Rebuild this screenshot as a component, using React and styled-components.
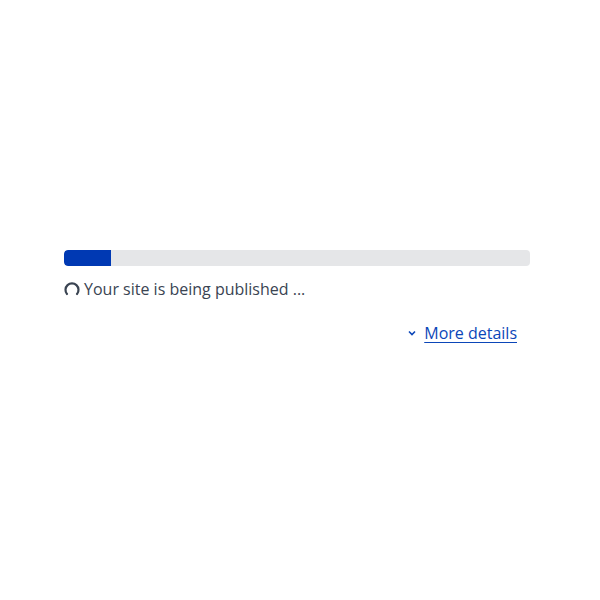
import React from "react";
import styled, { createGlobalStyle } from "styled-components";

const Global = createGlobalStyle`
  html, body { margin: 0; padding: 0; background: #fff; }
  body { font-family: "Open Sans", "Noto Sans", sans-serif; }
`;

const Page = styled.div`
  padding: 250px 70px 0 64px;
`;

const Track = styled.div`
  height: 16px;
  background: #e5e6e8;
  border-radius: 4px;
  overflow: hidden;
`;

const Fill = styled.div`
  height: 100%;
  background: #0039b3;
  border-radius: 4px 0 0 4px;
`;

const Status = styled.div`
  display: flex;
  align-items: center;
  gap: 4px;
  margin-top: 11px;
  font-size: 16px;
  line-height: 24px;
  color: #3a4452;
`;

const Spinner = styled.svg`
  width: 16px;
  height: 16px;
  flex: none;
`;

const Actions = styled.div`
  display: flex;
  justify-content: flex-end;
  margin-top: 20px;
  padding-right: 13px;
`;

const Link = styled.a`
  display: inline-flex;
  align-items: center;
  gap: 7px;
  font-size: 16px;
  line-height: 24px;
  color: #0b46b8;
  text-decoration: none;
  cursor: pointer;
`;

const LinkText = styled.span`
  text-decoration: underline;
  text-underline-offset: 3px;
`;

export default function App() {
  const progress = 47 / 466;
  return (
    <>
      <Global />
      <Page>
        <Track>
          <Fill style={{ width: `${progress * 100}%` }} />
        </Track>
        <Status>
          <Spinner viewBox="0 0 16 16">
            <path
              d="M3 13 A6.5 6.5 0 1 1 13 13"
              fill="none"
              stroke="#3a4452"
              strokeWidth="2.2"
              strokeLinecap="round"
            />
          </Spinner>
          Your site is being published ...
        </Status>
        <Actions>
          <Link>
            <svg width="10" height="10" viewBox="0 0 10 10">
              <path d="M2 3.5 L5 6.5 L8 3.5" fill="none" stroke="#0b46b8" strokeWidth="1.6" />
            </svg>
            <LinkText>More details</LinkText>
          </Link>
        </Actions>
      </Page>
    </>
  );
}
